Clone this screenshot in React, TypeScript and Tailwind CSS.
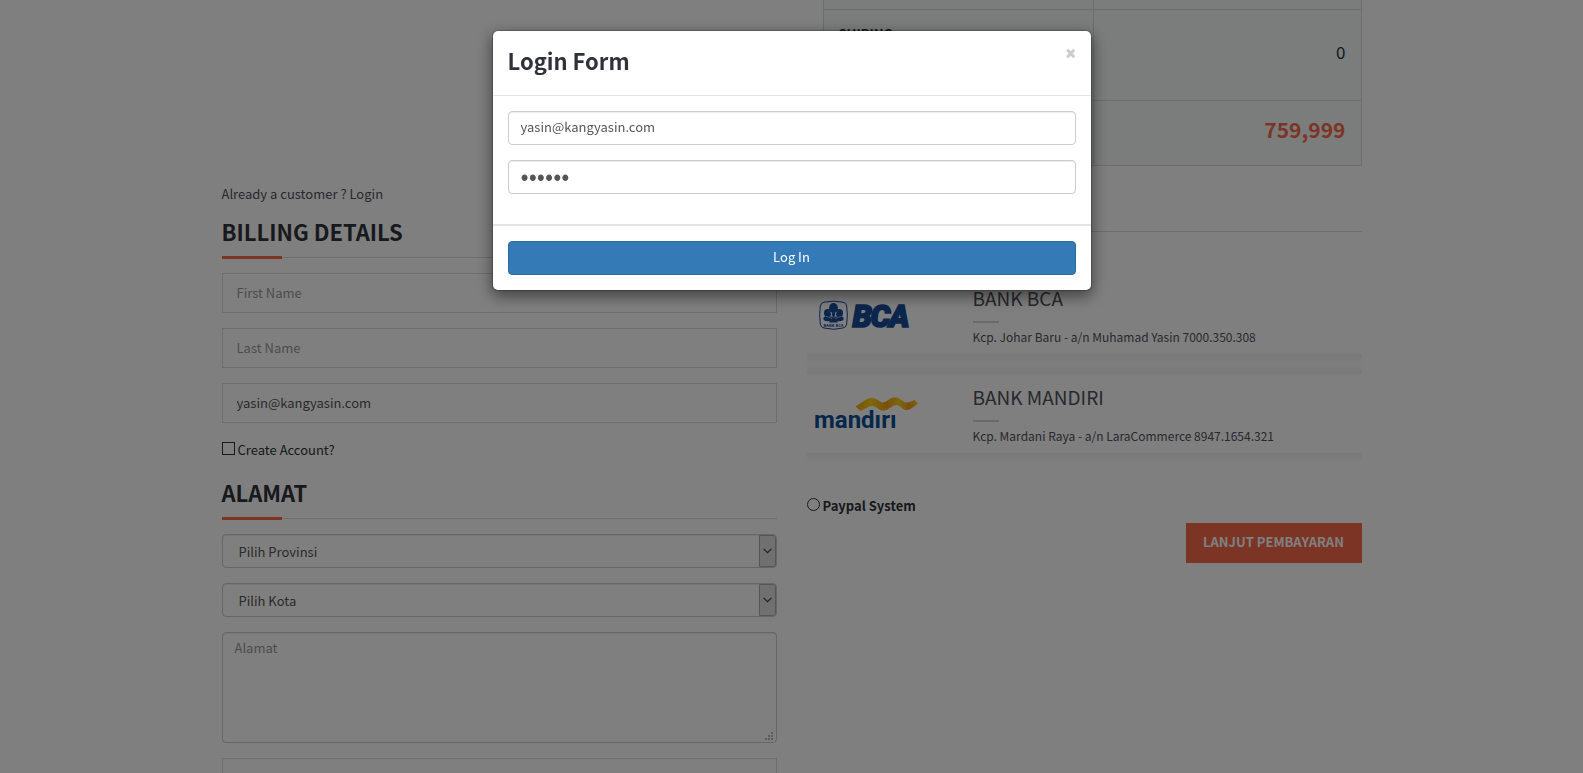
import React from "react";

function SectionTitle({ children }: { children: React.ReactNode }) {
  return (
    <div className="mb-[15px] border-b border-[#dadada]">
      <h3 className="-mb-[2px] text-[22px] leading-[34px] font-bold text-[#30323a] uppercase">
        {children}
        <span className="mt-2 block h-[3px] w-[60px] bg-[#f8694a]" />
      </h3>
    </div>
  );
}

function PlainInput({ label, value }: { label: string; value?: string }) {
  return (
    <input
      type="text"
      aria-label={label}
      placeholder={label}
      defaultValue={value}
      className="mb-[15px] block h-10 w-full border border-[#dadada] bg-white px-[14px] pb-px text-[13px] text-[#555] placeholder:text-[#999] placeholder:opacity-100"
    />
  );
}

function SelectBox({ label }: { label: string }) {
  return (
    <div className="relative mb-[15px]">
      <select
        aria-label={label}
        className="block h-[34px] w-full appearance-none rounded-[4px] border border-[#ccc] bg-white px-4 pt-[2px] text-[13px] text-[#555] shadow-[inset_0_1px_1px_rgba(0,0,0,0.075)]"
      >
        <option>{label}</option>
      </select>
      <span className="pointer-events-none absolute inset-y-px right-px flex w-[17px] items-center justify-center rounded-r-[3px] border border-[#adadad] bg-[#e1e1e1]">
        <svg width="9" height="6" viewBox="0 0 9 6" fill="none" stroke="#404040" strokeWidth="1.2">
          <path d="M0.6 0.8 L4.5 4.7 L8.4 0.8" />
        </svg>
      </span>
    </div>
  );
}

function BcaLogo() {
  return (
    <svg width="104" height="48" viewBox="0 -8 104 48" role="img" aria-label="BCA">
      <path
        d="M5 2.2 Q14.5 0 24 2.2 Q27.3 2.7 27.7 6 Q29 15 27.7 24 Q27.3 27.3 24 28 Q14.5 30.5 5 28 Q1.7 27.3 1.3 24 Q0 15 1.3 6 Q1.7 2.7 5 2.2 Z"
        fill="none"
        stroke="#174b98"
        strokeWidth="1"
      />
      <g fill="#174b98">
        <ellipse cx="14.5" cy="8" rx="4.4" ry="5" />
        <ellipse cx="8.6" cy="13" rx="3.6" ry="4" />
        <ellipse cx="20.4" cy="13" rx="3.6" ry="4" />
        <ellipse cx="8.8" cy="18.6" rx="4.4" ry="2.7" />
        <ellipse cx="20.2" cy="18.6" rx="4.4" ry="2.7" />
        <path d="M13.5 10 h2 l1 8 2.5 4.5 h-9 l2.5 -4.5 Z" />
      </g>
      <path d="M14 17.5 L11 11.5 M15 17.5 L18 11.5 M13 18.5 L7 16.2 M16 18.5 L22 16.2" stroke="#fff" strokeWidth="0.5" fill="none" />
      <text x="14.5" y="26.6" fontSize="4" fontWeight="700" textAnchor="middle" fill="#174b98">
        BANK BCA
      </text>
      <g
        fill="#174b98"
        stroke="#174b98"
        strokeWidth="1.7"
        fontFamily="Roboto, sans-serif"
        fontWeight="900"
        fontStyle="italic"
        fontSize="31"
      >
        <text x="33.5" y="27">B</text>
        <text x="51.5" y="27">C</text>
        <text x="70" y="27">A</text>
      </g>
    </svg>
  );
}

function MandiriLogo() {
  return (
    <svg width="106" height="40" viewBox="0 0 106 40" role="img" aria-label="mandiri">
      <defs>
        <linearGradient id="ribbon" x1="0" x2="1" y1="0" y2="0">
          <stop offset="0" stopColor="#f0a818" />
          <stop offset="0.25" stopColor="#ffcf10" />
          <stop offset="0.5" stopColor="#f2a01c" />
          <stop offset="0.7" stopColor="#ffcf10" />
          <stop offset="0.85" stopColor="#f2a01c" />
          <stop offset="1" stopColor="#ffc814" />
        </linearGradient>
      </defs>
      <path
        d="M40.5 9.5 L52 2 C55 0.5 58 0.5 61 2 C65 4 66 6.5 70 5 C74 3 76 0 81 0.5 C86 1 87 5 91 5.5 C94 5.5 97 4 99.5 3 L103 6.5 C99 9.5 95 13.5 91 13 C86 12 85 7.5 81 8 C76 9 73 14 68 13.5 C63 13 61 8.5 57 9 C52 9.5 49 12.5 45.5 14 Z"
        fill="url(#ribbon)"
      />
      <text x="-1" y="31" fill="#0b4f96" fontFamily="Roboto, sans-serif" fontWeight="700" fontSize="24">
        mandırı
      </text>
    </svg>
  );
}

function BankItem({ logo, name, detail }: { logo: React.ReactNode; name: string; detail: string }) {
  return (
    <li className="flex h-[79px] bg-white">
      <div className="flex w-[166px] shrink-0 items-start">{logo}</div>
      <div className="pt-[11px]">
        <h4 className="text-[19px] leading-[24px] text-[#50525c]">{name}</h4>
        <span className="mt-[11px] block h-[2px] w-[26px] bg-[#d4d4d4]" />
        <p className="mt-[5px] text-[12px] leading-[18px] text-[#50525c]">{detail}</p>
      </div>
    </li>
  );
}

export default function App() {
  return (
    <div className="h-screen overflow-hidden bg-white font-['Noto_Sans_CJK_JP','Noto_Sans',sans-serif] text-[13px] text-[#50525c]">
      <main className="mx-auto max-w-[1170px] px-[15px]">
        <div className="flex justify-end">
          <table className="w-[539px] table-fixed border-collapse bg-[#f6f9f8]">
            <colgroup>
              <col className="w-[270px]" />
              <col />
            </colgroup>
            <tbody>
              <tr className="h-[9px]">
                <td className="border border-t-0 border-[#dadada]" />
                <td className="border border-t-0 border-[#dadada]" />
              </tr>
              <tr className="h-[91px]">
                <th
                  scope="row"
                  className="border border-[#dadada] px-[15px] pt-[14px] text-left align-top text-[13px] leading-[20px] font-bold text-[#30323a]"
                >
                  SHIPING
                </th>
                <td className="border border-[#dadada] px-[15px] pb-[6px] text-right text-[17px] text-[#30323a]">0</td>
              </tr>
              <tr className="h-[65px]">
                <td className="border border-[#dadada]" />
                <td className="border border-[#dadada] px-[15px] pb-2 text-right text-[21px] leading-[32px] font-bold text-[#f8694a]">
                  759,999
                </td>
              </tr>
            </tbody>
          </table>
        </div>

        <div className="grid grid-cols-2 gap-[30px]">
          <section>
            <p className="mt-[18px] mb-[10px] leading-[20px]">
              Already a customer ? <a href="#login">Login</a>
            </p>
            <SectionTitle>Billing Details</SectionTitle>
            <PlainInput label="First Name" />
            <PlainInput label="Last Name" />
            <PlainInput label="Email" value="yasin@kangyasin.com" />
            <label className="mt-[17px] mb-[15px] flex h-5 items-center gap-[3px] text-[#30323a]">
              <input
                type="checkbox"
                className="mb-[3px] size-[13px] appearance-none border border-[#333] bg-white checked:bg-[#333]"
              />
              Create Account?
            </label>
            <SectionTitle>Alamat</SectionTitle>
            <SelectBox label="Pilih Provinsi" />
            <SelectBox label="Pilih Kota" />
            <div className="relative mb-[15px]">
              <textarea
                aria-label="Alamat"
                placeholder="Alamat"
                className="block h-[111px] w-full resize-none rounded-[4px] border border-[#ccc] bg-white px-3 py-[5px] text-[13px] leading-[20px] shadow-[inset_0_1px_1px_rgba(0,0,0,0.075)] placeholder:text-[#999] placeholder:opacity-100"
              />
              <svg className="pointer-events-none absolute right-1 bottom-[3px]" width="8" height="8" fill="#b8b8b8">
                <path d="M6 0h2v2h-2z M3 3h2v2h-2z M6 3h2v2h-2z M0 6h2v2h-2z M3 6h2v2h-2z M6 6h2v2h-2z" />
              </svg>
            </div>
            <PlainInput label="ZIP Code" />
          </section>

          <section>
            <div className="h-[66px] border-b border-[#dadada]" />
            <ul className="mt-[43px]">
              <BankItem
                logo={
                  <div className="pt-[17px] pl-3">
                    <BcaLogo />
                  </div>
                }
                name="BANK BCA"
                detail="Kcp. Johar Baru - a/n Muhamad Yasin 7000.350.308"
              />
              <li aria-hidden="true" className="h-5 bg-linear-to-b from-[#f3f3f3] via-[#fdfdfd] to-[#f3f3f3]" />
              <BankItem
                logo={
                  <div className="pt-[23px] pl-2">
                    <MandiriLogo />
                  </div>
                }
                name="BANK MANDIRI"
                detail="Kcp. Mardani Raya - a/n LaraCommerce 8947.1654.321"
              />
              <li aria-hidden="true" className="h-[10px] bg-linear-to-b from-[#f3f3f3] to-white" />
            </ul>
            <label className="mt-[33px] flex h-5 items-center gap-[3px] font-bold text-[#30323a]">
              <input
                type="radio"
                name="payment"
                className="mb-[3px] size-[13px] appearance-none rounded-full border border-[#333] bg-white checked:bg-[#333]"
              />
              Paypal System
            </label>
            <div className="mt-[7px] flex justify-end">
              <button
                type="button"
                className="h-10 w-[176px] bg-[#f8694a] pb-[2px] text-center text-[13px] font-bold whitespace-nowrap text-white uppercase"
              >
                Lanjut Pembayaran
              </button>
            </div>
          </section>
        </div>
      </main>

      <div className="fixed inset-0 flex items-start justify-center bg-black/50 pt-[30px]">
        <form
          role="dialog"
          aria-labelledby="login-title"
          onSubmit={(e) => e.preventDefault()}
          className="w-[600px] rounded-[6px] border border-black/20 bg-white bg-clip-padding shadow-[0_5px_15px_rgba(0,0,0,0.5)]"
        >
          <div className="flex h-[65px] items-start justify-between border-b border-[#e5e5e5] px-[15px] pt-3">
            <h4 id="login-title" className="text-[22px] leading-[34px] font-bold text-[#30323a]">
              Login Form
            </h4>
            <button type="button" aria-label="Close" className="pt-[6px]">
              <svg width="10" height="9" viewBox="0 0 10 9" stroke="#ccc" strokeWidth="3" className="block">
                <path d="M1.2 0.8 L8.2 8.2 M8.2 0.8 L1.2 8.2" />
              </svg>
            </button>
          </div>
          <div className="flex flex-col gap-[15px] border-b-2 border-[#e5e5e5] px-[15px] pt-[15px] pb-[30px]">
            <input
              type="text"
              aria-label="Email"
              defaultValue="yasin@kangyasin.com"
              className="block h-[34px] w-full rounded-[4px] border border-[#ccc] px-3 pb-1 text-[13px] text-[#555] shadow-[inset_0_1px_1px_rgba(0,0,0,0.075)]"
            />
            <input
              type="password"
              aria-label="Password"
              defaultValue="secret"
              className="block h-[34px] w-full rounded-[4px] border border-[#ccc] px-3 pb-[6px] text-[24px] leading-[24px] text-[#555] shadow-[inset_0_1px_1px_rgba(0,0,0,0.075)]"
            />
          </div>
          <div className="p-[15px]">
            <button
              type="submit"
              className="block h-[34px] w-full rounded-[4px] border border-[#2e6da4] bg-[#337ab7] pb-[2px] text-[13px] text-white"
            >
              Log In
            </button>
          </div>
        </form>
      </div>
    </div>
  );
}
